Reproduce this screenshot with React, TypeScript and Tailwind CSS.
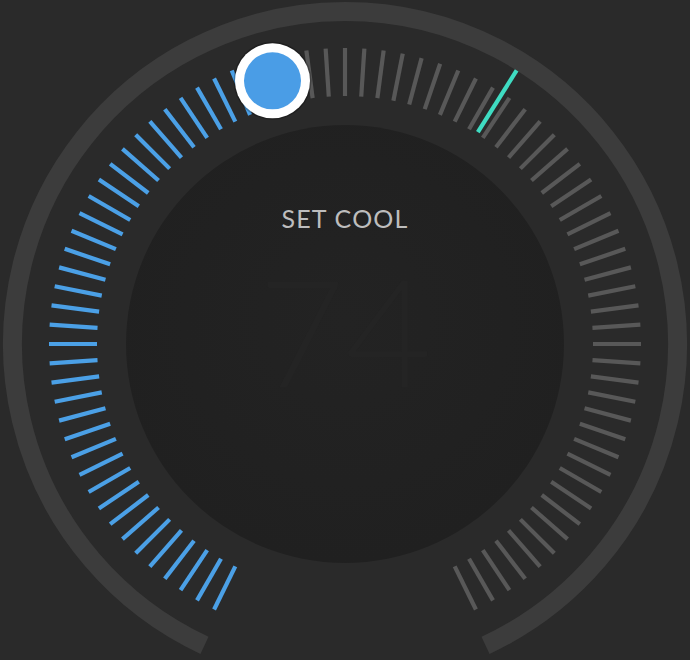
import React from 'react';

const CX = 345;
const CY = 344;

// angle in degrees, measured clockwise from 12 o'clock
function pt(r: number, deg: number) {
  const a = (deg * Math.PI) / 180;
  return { x: CX + r * Math.sin(a), y: CY - r * Math.cos(a) };
}

const STEP = 3.75;
const TICKS = Array.from({ length: 83 }, (_, i) => (i - 41) * STEP);
const KNOB_ANGLE = -15.4;
const CURRENT_ANGLE = 32.1;

function arcPath(r: number, from: number, to: number) {
  const a = pt(r, from);
  const b = pt(r, to);
  const large = to - from > 180 ? 1 : 0;
  return `M ${a.x} ${a.y} A ${r} ${r} 0 ${large} 1 ${b.x} ${b.y}`;
}

function Dial() {
  const knob = pt(273, KNOB_ANGLE);
  const curIn = pt(250, CURRENT_ANGLE);
  const curOut = pt(323, CURRENT_ANGLE);

  return (
    <svg width={690} height={660} viewBox="0 0 690 660" className="block">
      <defs>
        <radialGradient id="inner" cx="50%" cy="45%" r="55%">
          <stop offset="0%" stopColor="#232323" />
          <stop offset="100%" stopColor="#202020" />
        </radialGradient>
      </defs>

      {/* outer track */}
      <path d={arcPath(332.5, -155, 155)} fill="none" stroke="#3c3c3c" strokeWidth={19} />

      {/* inner face */}
      <circle cx={CX} cy={CY} r={219} fill="url(#inner)" />

      {/* ticks */}
      {TICKS.map((deg) => {
        const p1 = pt(248, deg);
        const p2 = pt(296, deg);
        const active = deg < KNOB_ANGLE;
        return (
          <line
            key={deg}
            x1={p1.x}
            y1={p1.y}
            x2={p2.x}
            y2={p2.y}
            stroke={active ? '#4ba0e6' : '#585858'}
            strokeWidth={4.2}
          />
        );
      })}

      {/* current temperature marker */}
      <line x1={curIn.x} y1={curIn.y} x2={curOut.x} y2={curOut.y} stroke="#3fdcc2" strokeWidth={4.2} />

      {/* knob */}
      <circle cx={knob.x} cy={knob.y} r={39} fill="#000" opacity={0.25} />
      <circle cx={knob.x} cy={knob.y} r={37.5} fill="#ffffff" />
      <circle cx={knob.x} cy={knob.y} r={28.5} fill="#4a9de6" />
    </svg>
  );
}

export default function App() {
  return (
    <div className="w-[690px] h-[660px] overflow-hidden bg-[#2a2a2a]">
      <div className="grid">
        <div className="col-start-1 row-start-1">
          <Dial />
        </div>
        <div className="col-start-1 row-start-1 flex flex-col items-center pt-[203px] font-['Lato','Open_Sans',sans-serif]">
          <span className="text-[25px] leading-[30px] tracking-[1.2px] text-[#bdbdbd]">SET COOL</span>
          <span className="mt-[22px] text-[150px] leading-none font-light text-[#242424]">74</span>
        </div>
      </div>
    </div>
  );
}
